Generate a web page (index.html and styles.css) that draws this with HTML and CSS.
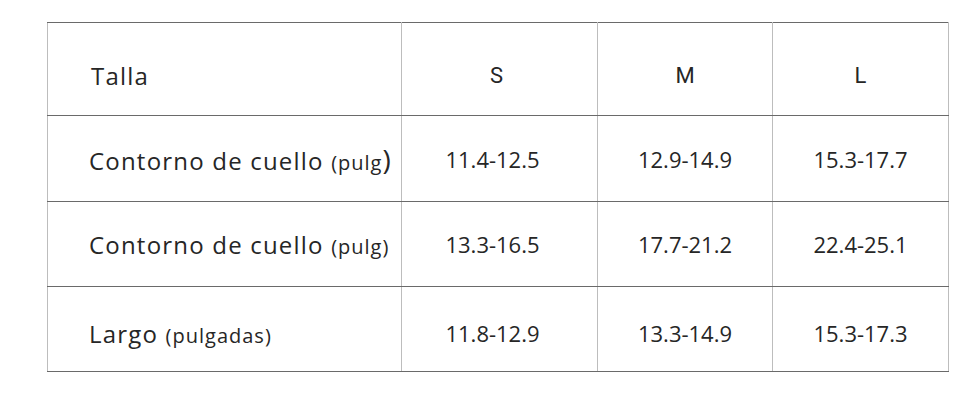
FILE: index.html
```html
<!DOCTYPE html>
<html lang="es">
<head>
<meta charset="utf-8">
<title>Tabla de tallas</title>
<link rel="stylesheet" href="styles.css">
</head>
<body>
<div class="wrap">
<table class="sizes">
  <colgroup>
    <col class="c-label"><col class="c-s"><col class="c-m"><col class="c-l">
  </colgroup>
  <tr class="r-head">
    <th class="label head-label">Talla</th>
    <th class="size size-s">S</th>
    <th class="size">M</th>
    <th class="size">L</th>
  </tr>
  <tr class="r1">
    <td class="label">Contorno de cuello <span class="unit">(pulg</span><span class="bigparen">)</span></td>
    <td class="val val-s">11.4-12.5</td>
    <td class="val">12.9-14.9</td>
    <td class="val">15.3-17.7</td>
  </tr>
  <tr class="r2">
    <td class="label">Contorno de cuello <span class="unit">(pulg)</span></td>
    <td class="val val-s">13.3-16.5</td>
    <td class="val">17.7-21.2</td>
    <td class="val">22.4-25.1</td>
  </tr>
  <tr class="r3">
    <td class="label">Largo <span class="unit">(pulgadas)</span></td>
    <td class="val val-s">11.8-12.9</td>
    <td class="val">13.3-14.9</td>
    <td class="val">15.3-17.3</td>
  </tr>
</table>
</div>
</body>
</html>
```
FILE: styles.css
```css
html, body {
  margin: 0;
  padding: 0;
  background: #ffffff;
}
.wrap {
  padding: 22px 0 0 47px;
}
.sizes {
  border-collapse: collapse;
  table-layout: fixed;
  width: 902px;
  border: 1px solid #505050;
  font-family: "Open Sans", sans-serif;
  color: #262626;
}
.c-label { width: 354px; }
.c-s { width: 196px; }
.c-m { width: 175px; }
.c-l { width: 176px; }
.sizes th, .sizes td {
  border-left: 1px solid #bdbdbd;
  border-right: 1px solid #bdbdbd;
  border-top: 1px solid #6a6a6a;
  border-bottom: 1px solid #6a6a6a;
  padding: 0;
  font-weight: 400;
}
.r-head { height: 93px; }
.r1 { height: 86px; }
.r2 { height: 85px; }
.r3 { height: 85px; }
.label {
  text-align: left;
  padding-left: 41px !important;
  font-size: 24px;
  letter-spacing: 1.2px;
  white-space: nowrap;
}
.head-label {
  padding-left: 43px !important;
  padding-top: 12px !important;
}
.unit {
  font-size: 20px;
  letter-spacing: 1px;
}
.bigparen {
  font-size: 28px;
  letter-spacing: 0;
}
.size {
  text-align: center;
  font-family: Roboto, "Liberation Sans", sans-serif;
  font-size: 22px;
  padding-top: 12px !important;
}
.size-s { padding-right: 6px !important; }
.val {
  text-align: center;
  font-size: 22px;
  letter-spacing: 0;
}
.val-s { padding-right: 14px !important; }
.r3 td { padding-top: 8px; }
```
